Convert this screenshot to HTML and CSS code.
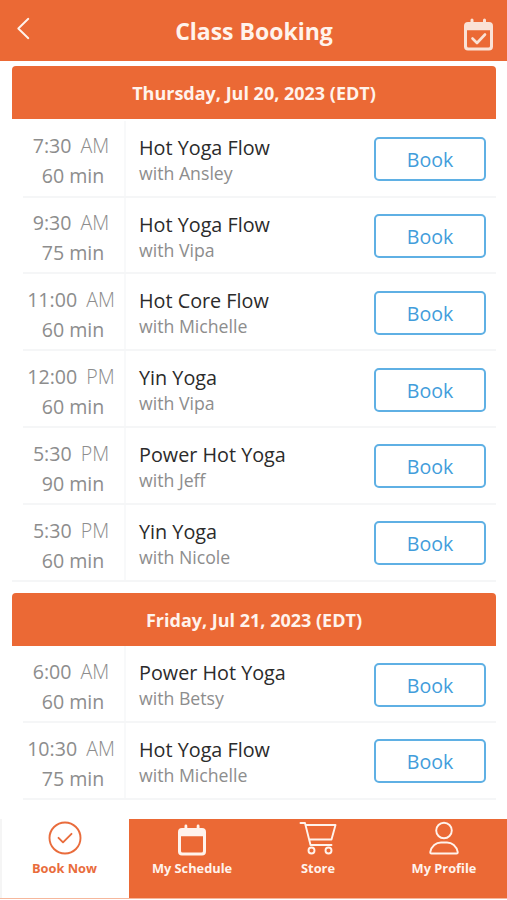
FILE: index.html
```html
<!DOCTYPE html>
<html lang="en">
<head>
<meta charset="utf-8">
<title>Class Booking</title>
<link rel="stylesheet" href="styles.css">
</head>
<body>
<header class="topbar">
  <svg class="back" width="14" height="22" viewBox="0 0 14 22"><path d="M12.300 1.800 2.300 11.500l10 9.700"/></svg>
  <h1>Class Booking</h1>
  <svg class="calendar" width="30" height="34" viewBox="0 0 30 34"><path fill-rule="evenodd" d="M4 4H6.500V2a1.500 1.500 0 0 1 3 0V4H19V2a1.500 1.500 0 0 1 3 0V4H25a4 4 0 0 1 4 4V28.500a4 4 0 0 1-4 4H4a4 4 0 0 1-4-4V8a4 4 0 0 1 4-4ZM3 12.200V28q0 1.500 1.500 1.500h20q1.500 0 1.500-1.500V12.200Z"/><path class="tick" d="m8.500 20.500 4.500 4.500 8-8.500"/></svg>
</header>
<main>
  <section class="first">
    <h2>Thursday, Jul 20, 2023 (EDT)</h2>
    <article><div class="when"><p class="time">7:30 <span>AM</span></p><p>60 min</p></div><div class="what"><h3>Hot Yoga Flow</h3><p>with Ansley</p></div><button>Book</button></article>
    <article><div class="when"><p class="time">9:30 <span>AM</span></p><p>75 min</p></div><div class="what"><h3>Hot Yoga Flow</h3><p>with Vipa</p></div><button>Book</button></article>
    <article><div class="when"><p class="time">11:00 <span>AM</span></p><p>60 min</p></div><div class="what"><h3>Hot Core Flow</h3><p>with Michelle</p></div><button>Book</button></article>
    <article><div class="when"><p class="time">12:00 <span>PM</span></p><p>60 min</p></div><div class="what"><h3>Yin Yoga</h3><p>with Vipa</p></div><button>Book</button></article>
    <article><div class="when"><p class="time">5:30 <span>PM</span></p><p>90 min</p></div><div class="what"><h3>Power Hot Yoga</h3><p>with Jeff</p></div><button>Book</button></article>
    <article class="last"><div class="when"><p class="time">5:30 <span>PM</span></p><p>60 min</p></div><div class="what"><h3>Yin Yoga</h3><p>with Nicole</p></div><button>Book</button></article>
  </section>
  <section>
    <h2>Friday, Jul 21, 2023 (EDT)</h2>
    <article><div class="when"><p class="time">6:00 <span>AM</span></p><p>60 min</p></div><div class="what"><h3>Power Hot Yoga</h3><p>with Betsy</p></div><button>Book</button></article>
    <article><div class="when"><p class="time">10:30 <span>AM</span></p><p>75 min</p></div><div class="what"><h3>Hot Yoga Flow</h3><p>with Michelle</p></div><button>Book</button></article>
  </section>
</main>
<nav>
  <a class="active"><svg width="40" height="36" viewBox="0 0 40 36"><circle cx="20" cy="19" r="15.500"/><path d="m13.500 18.800 4.500 4.500 8.500-8.500"/></svg>Book Now</a>
  <a><svg width="40" height="36" viewBox="0 0 40 36"><path class="solid" fill-rule="evenodd" d="M10 9h2.500V7a1.400 1.400 0 0 1 2.800 0V9h9.400V7a1.400 1.400 0 0 1 2.800 0V9H30a4 4 0 0 1 4 4V32.500a4 4 0 0 1-4 4H10a4 4 0 0 1-4-4V13a4 4 0 0 1 4-4ZM9 17.200V32q0 1.500 1.500 1.500h19q1.500 0 1.500-1.500V17.200Z"/></svg>My Schedule</a>
  <a><svg width="40" height="36" viewBox="0 0 40 36"><path d="M2.500 4H7L12.500 26H33.500M8 6H37.500L33.500 20.500H11.500"/><circle cx="13.500" cy="31.500" r="3"/><circle cx="30.500" cy="31.500" r="3"/></svg>Store</a>
  <a><svg width="40" height="36" viewBox="0 0 40 36"><circle cx="20" cy="11.500" r="7.800"/><path d="M7.500 34.500H32.500Q34 34.500 33.700 33C32.500 27 28 23.500 23 23.500H17C12 23.500 7.500 27 6.300 33Q6 34.500 7.500 34.500Z"/></svg>My Profile</a>
</nav>
</body>
</html>
```
FILE: styles.css
```css
* { box-sizing: border-box; margin: 0; }
body {
  height: 900px;
  display: flex;
  flex-direction: column;
  background: #fff;
  font-family: "Open Sans", sans-serif;
  overflow: hidden;
}
.topbar {
  display: grid;
  grid-template-columns: 60px 1fr 60px;
  height: 61.400px;
  background: #eb6935;
  color: #fff3ec;
}
svg { fill: none; stroke: currentColor; stroke-width: 1.900; stroke-linecap: round; stroke-linejoin: round; overflow: visible; }
.back { margin: 17px 0 0 16px; }
.calendar { margin: 18px 0 0 17px; color: #fae2d6; fill: currentColor; stroke: none; }
.tick { fill: none; stroke: currentColor; stroke-width: 2.600; }
h1 { font-size: 23px; line-height: 30px; margin-top: 16px; text-align: center; padding-left: 1px; }
main { padding: 4.200px 11px 0 12px; height: 757.600px; }
section { margin-bottom: 10.700px; }
h2 {
  height: 53.700px;
  line-height: 54px;
  border-radius: 4px 4px 0 0;
  background: #eb6935;
  color: #fff3ec;
  font-size: 18px;
  text-align: center;
}
.first h2 { margin-bottom: 1.400px; }
article {
  display: flex;
  height: 76.900px;
  margin-left: 11px;
  border-bottom: 2px solid #f5f6f7;
}
.when {
  width: 103px;
  border-right: 2px solid #f8f9fa;
  color: #8d8d8d;
  font-size: 19.600px;
  line-height: 30px;
  text-align: center;
  padding: 10.400px 1px 0 0;
}
.last { margin-left: 0; }
.last .when { width: 114px; padding-left: 11px; }
.time { position: relative; left: -2px; white-space: nowrap; }
.time span { margin-left: 4px; font-weight: 300; }
.what { flex: 1; padding: 13px 0 0 13px; }
h3 { font-size: 19.800px; line-height: 27px; font-weight: 400; color: #2b2b2b; }
.what p { font-size: 17.700px; line-height: 24px; color: #8d8d8d; }
button {
  width: 112px;
  height: 44px;
  margin: 16.200px 10px 0 0;
  border: 2px solid #5fb0e4;
  border-radius: 5px;
  background: #fff;
  color: #429ddb;
  font: 400 19.600px/40px "Open Sans", sans-serif;
  padding: 1px 0 0;
}
nav {
  display: flex;
  height: 80px;
  background: #eb6935;
  color: #fff3ec;
  border-bottom: 1px solid #f6b79c;
}
nav a {
  flex: 1;
  display: flex;
  flex-direction: column;
  align-items: center;
  font-size: 12.800px;
  line-height: 18px;
  font-weight: 700;
  gap: 4px;
}
nav .solid { fill: currentColor; stroke: none; }
nav .active { flex: 0 0 129px; background: #fff; color: #e96c3c; border-left: 2px solid #f5f5f5; padding-right: 2px; }
```
